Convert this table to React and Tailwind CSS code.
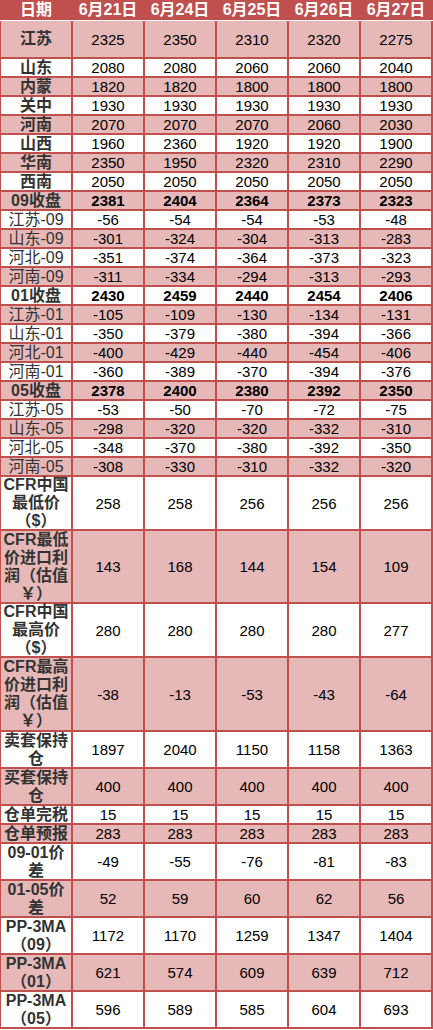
import React from "react";

const FONT = { fontFamily: '"Liberation Sans","Noto Sans CJK SC",sans-serif' };

const P = "bg-[#E6B8B7]";
const W = "bg-white";

const rows = [
  { l: ["江苏"], v: ["2325", "2350", "2310", "2320", "2275"], h: "h-[36px]", bg: P, lb: true },
  { l: ["山东"], v: ["2080", "2080", "2060", "2060", "2040"], h: "h-[17px]", bg: W, lb: true },
  { l: ["内蒙"], v: ["1820", "1820", "1800", "1800", "1800"], h: "h-[17px]", bg: P, lb: true },
  { l: ["关中"], v: ["1930", "1930", "1930", "1930", "1930"], h: "h-[17px]", bg: W, lb: true },
  { l: ["河南"], v: ["2070", "2070", "2070", "2060", "2030"], h: "h-[17px]", bg: P, lb: true },
  { l: ["山西"], v: ["1960", "2360", "1920", "1920", "1900"], h: "h-[17px]", bg: W, lb: true },
  { l: ["华南"], v: ["2350", "1950", "2320", "2310", "2290"], h: "h-[17px]", bg: P, lb: true },
  { l: ["西南"], v: ["2050", "2050", "2050", "2050", "2050"], h: "h-[17px]", bg: W, lb: true },
  { l: ["09收盘"], v: ["2381", "2404", "2364", "2373", "2323"], h: "h-[17px]", bg: P, lb: true, vb: true },
  { l: ["江苏-09"], v: ["-56", "-54", "-54", "-53", "-48"], h: "h-[17px]", bg: W },
  { l: ["山东-09"], v: ["-301", "-324", "-304", "-313", "-283"], h: "h-[17px]", bg: P },
  { l: ["河北-09"], v: ["-351", "-374", "-364", "-373", "-323"], h: "h-[17px]", bg: W },
  { l: ["河南-09"], v: ["-311", "-334", "-294", "-313", "-293"], h: "h-[17px]", bg: P },
  { l: ["01收盘"], v: ["2430", "2459", "2440", "2454", "2406"], h: "h-[17px]", bg: W, lb: true, vb: true },
  { l: ["江苏-01"], v: ["-105", "-109", "-130", "-134", "-131"], h: "h-[17px]", bg: P },
  { l: ["山东-01"], v: ["-350", "-379", "-380", "-394", "-366"], h: "h-[17px]", bg: W },
  { l: ["河北-01"], v: ["-400", "-429", "-440", "-454", "-406"], h: "h-[17px]", bg: P },
  { l: ["河南-01"], v: ["-360", "-389", "-370", "-394", "-376"], h: "h-[17px]", bg: W },
  { l: ["05收盘"], v: ["2378", "2400", "2380", "2392", "2350"], h: "h-[17px]", bg: P, lb: true, vb: true },
  { l: ["江苏-05"], v: ["-53", "-50", "-70", "-72", "-75"], h: "h-[17px]", bg: W },
  { l: ["山东-05"], v: ["-298", "-320", "-320", "-332", "-310"], h: "h-[17px]", bg: P },
  { l: ["河北-05"], v: ["-348", "-370", "-380", "-392", "-350"], h: "h-[17px]", bg: W },
  { l: ["河南-05"], v: ["-308", "-330", "-310", "-332", "-320"], h: "h-[17px]", bg: P },
  { l: ["CFR中国", "最低价", "（$）"], v: ["258", "258", "256", "256", "256"], h: "h-[52px]", bg: W, lb: true },
  { l: ["CFR最低", "价进口利", "润（估值", "￥）"], v: ["143", "168", "144", "154", "109"], h: "h-[71px]", bg: P, lb: true },
  { l: ["CFR中国", "最高价", "（$）"], v: ["280", "280", "280", "280", "277"], h: "h-[52px]", bg: W, lb: true },
  { l: ["CFR最高", "价进口利", "润（估值", "￥）"], v: ["-38", "-13", "-53", "-43", "-64"], h: "h-[72px]", bg: P, lb: true },
  { l: ["卖套保持", "仓"], v: ["1897", "2040", "1150", "1158", "1363"], h: "h-[35px]", bg: W, lb: true },
  { l: ["买套保持", "仓"], v: ["400", "400", "400", "400", "400"], h: "h-[35px]", bg: P, lb: true },
  { l: ["仓单完税"], v: ["15", "15", "15", "15", "15"], h: "h-[17px]", bg: W, lb: true },
  { l: ["仓单预报"], v: ["283", "283", "283", "283", "283"], h: "h-[17px]", bg: P, lb: true },
  { l: ["09-01价", "差"], v: ["-49", "-55", "-76", "-81", "-83"], h: "h-[35px]", bg: W, lb: true },
  { l: ["01-05价", "差"], v: ["52", "59", "60", "62", "56"], h: "h-[35px]", bg: P, lb: true },
  { l: ["PP-3MA", "（09）"], v: ["1172", "1170", "1259", "1347", "1404"], h: "h-[35px]", bg: W, lb: true },
  { l: ["PP-3MA", "（01）"], v: ["621", "574", "609", "639", "712"], h: "h-[35px]", bg: P, lb: true },
  { l: ["PP-3MA", "（05）"], v: ["596", "589", "585", "604", "693"], h: "h-[35px]", bg: W, lb: true },
];

const headers = ["日期", "6月21日", "6月24日", "6月25日", "6月26日", "6月27日"];

export default function App() {
  return (
    <div className="w-[433px] h-[1030px] bg-white overflow-hidden" style={FONT}>
      <div className="grid grid-cols-[70px_70px_70px_70px_70px_70px] gap-x-[2px] pl-px pr-[2px] h-[20px] bg-[#C0504D]">
        {headers.map((h) => (
          <div key={h} className="flex items-center justify-center text-white font-bold text-[16px] leading-[20px] whitespace-nowrap">
            {h}
          </div>
        ))}
      </div>
      <div className="h-px bg-white" />
      <div className="grid grid-cols-[70px_70px_70px_70px_70px_70px] gap-[2px] pl-px pr-[2px] pb-[2px] bg-[#C0504D]">
        {rows.map((r, i) => (
          <React.Fragment key={i}>
            <div
              className={`${r.h} ${r.bg} flex flex-col items-center justify-center text-center text-[16px] leading-[18px] text-[#333333] whitespace-nowrap ${r.lb ? "font-bold" : "font-normal"}`}
            >
              {r.l.map((t, j) => (
                <span key={j}>{t}</span>
              ))}
            </div>
            {r.v.map((v, j) => (
              <div
                key={j}
                className={`${r.h} ${r.bg} flex items-center justify-center text-[15px] leading-[17px] text-black ${r.vb ? "font-bold" : "font-normal"}`}
              >
                {v}
              </div>
            ))}
          </React.Fragment>
        ))}
      </div>
    </div>
  );
}
